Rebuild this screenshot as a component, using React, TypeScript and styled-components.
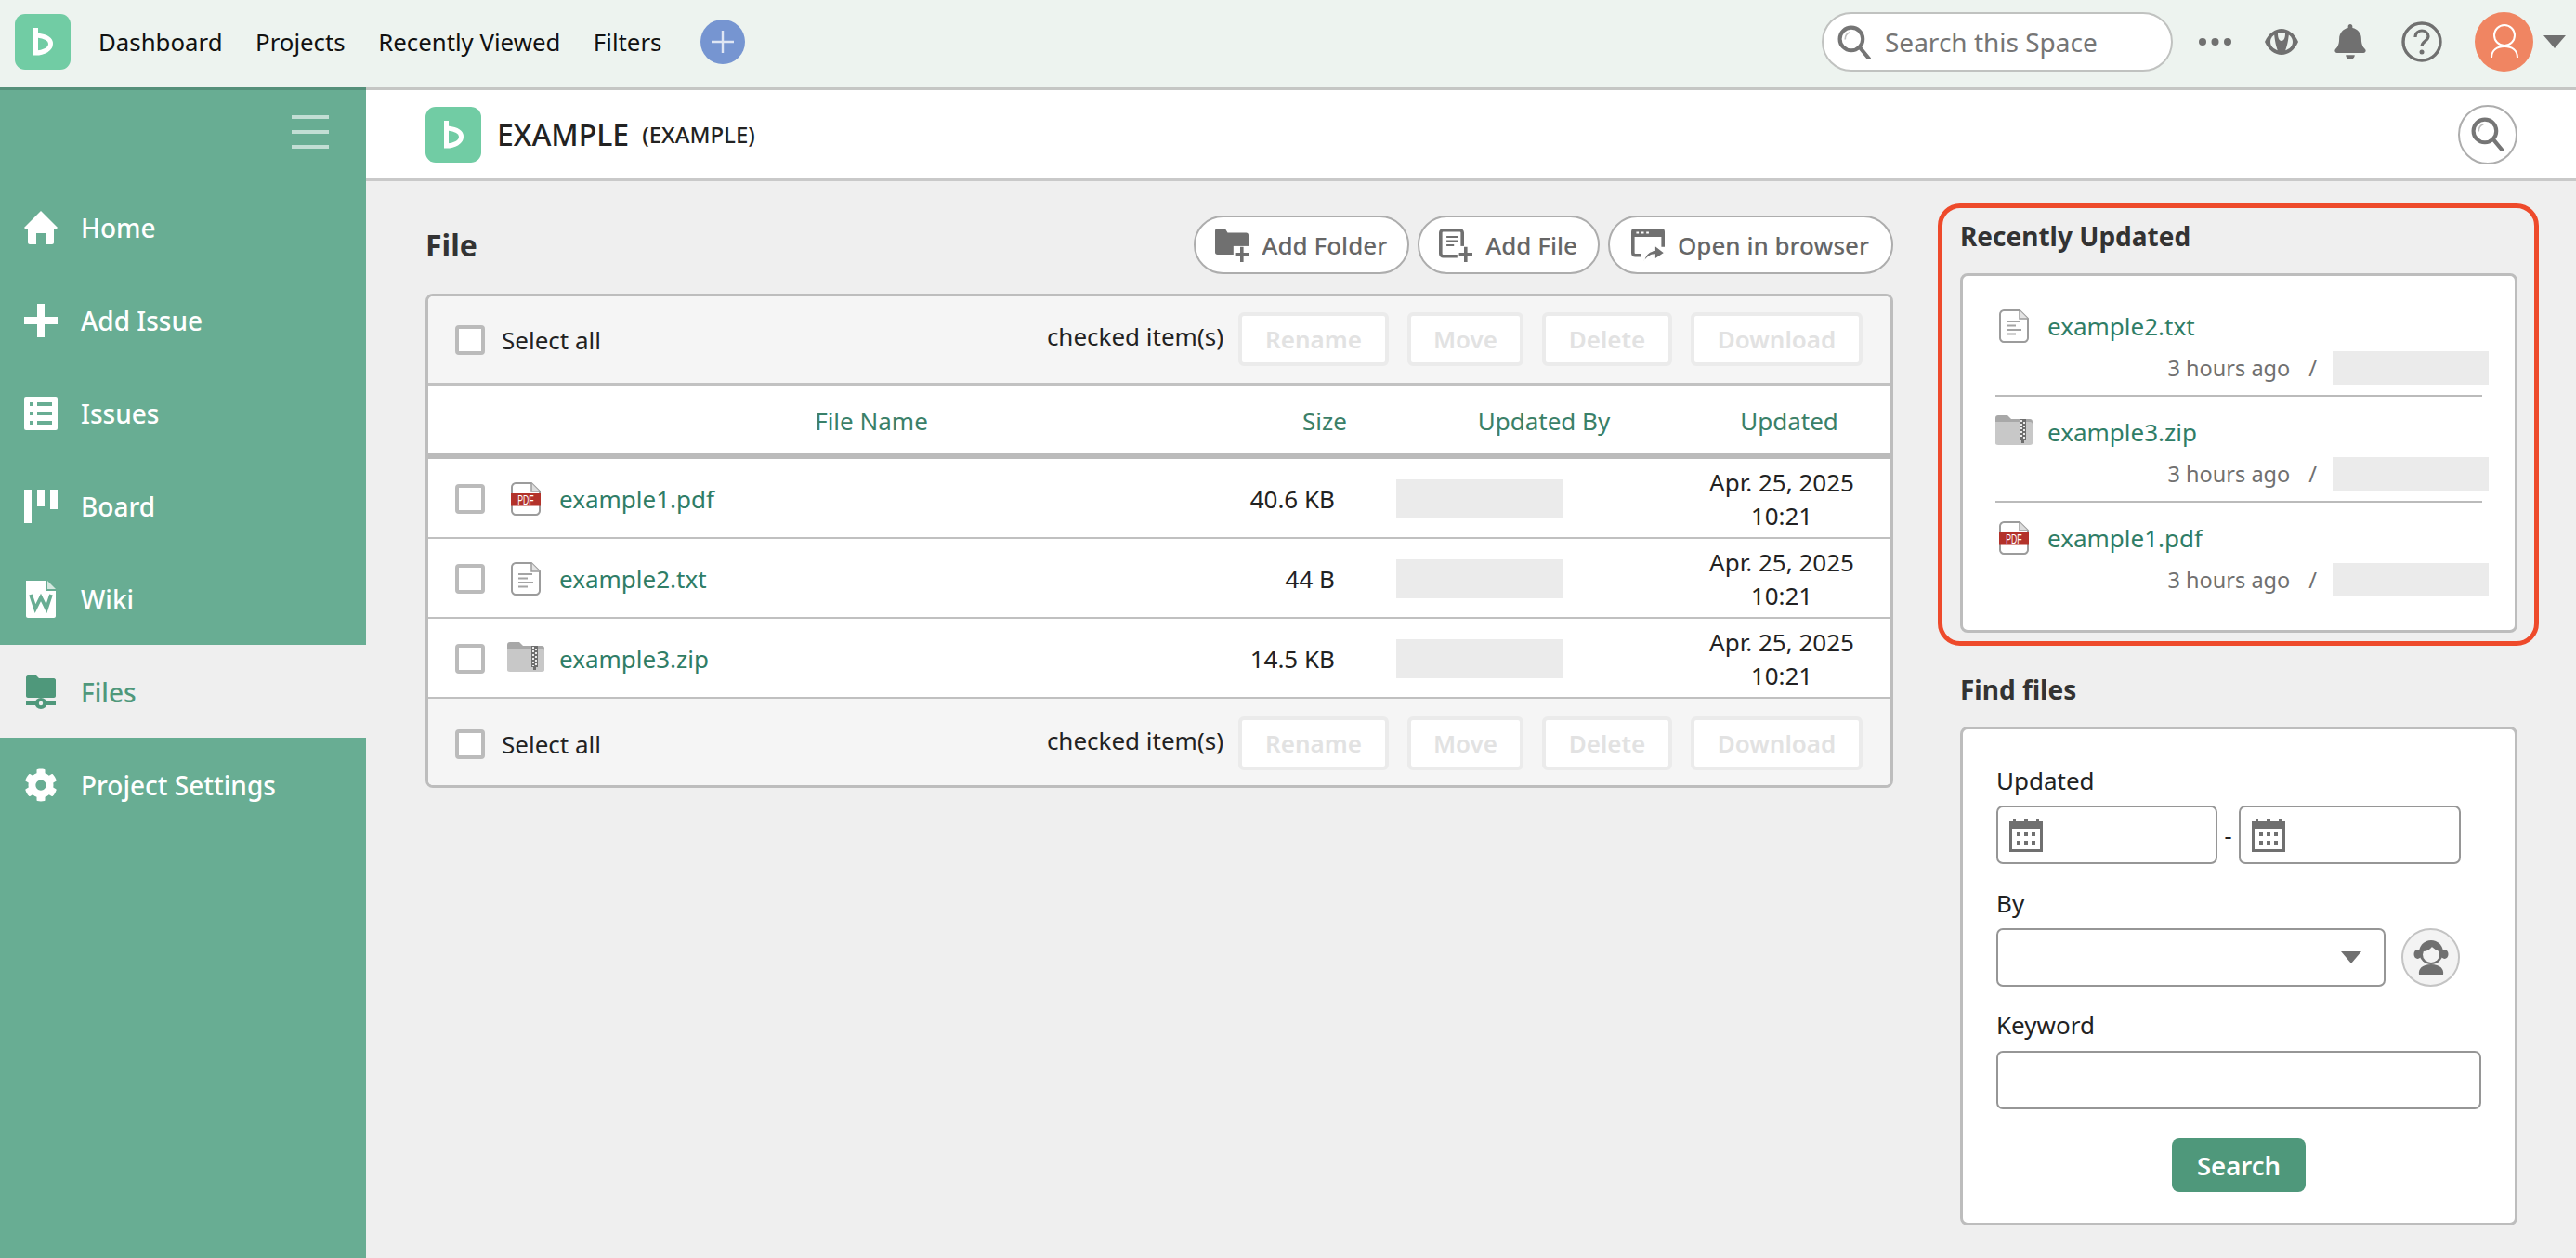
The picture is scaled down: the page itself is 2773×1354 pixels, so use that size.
import React from 'react';
import styled, { createGlobalStyle } from 'styled-components';
import { FaBell, FaCog } from 'react-icons/fa';

const GlobalStyle = createGlobalStyle`
  html, body {
    margin: 0;
    padding: 0;
    background: #efefef;
    font-family: "Noto Sans", "Open Sans", sans-serif;
    color: #222;
  }
  * { box-sizing: border-box; }
`;

const Page = styled.div`
  width: 2773px;
  height: 1354px;
  display: flex;
  flex-direction: column;
  overflow: hidden;
`;

const TopBar = styled.header`
  height: 94px;
  flex: none;
  display: flex;
  align-items: center;
  padding: 0 11px 4px 16px;
  background: #edf3ef;
`;

const LogoBox = styled.div`
  width: 60px;
  height: 60px;
  flex: none;
  border-radius: 11px;
  background: #71cca4;
  display: flex;
`;

const NavList = styled.nav`
  display: flex;
  align-items: center;
  gap: 35.5px;
  margin-left: 30px;
  font-size: 25.8px;
  color: #111;
`;

const PlusButton = styled.div`
  width: 48px;
  height: 48px;
  border-radius: 50%;
  background: #7695d1;
  display: flex;
  align-items: center;
  justify-content: center;
  margin-left: 6px;
`;

const SpaceSearch = styled.div`
  width: 378px;
  height: 64px;
  margin-left: auto;
  border: 2px solid #c0c2c0;
  border-radius: 32px;
  background: #fff;
  display: flex;
  align-items: center;
  gap: 14px;
  padding-left: 15px;
  font-size: 28px;
  color: #757575;
`;

const TopIcons = styled.div`
  display: flex;
  align-items: center;
  margin-left: 27px;
`;

const DotsIcon = styled.svg`
  width: 37px;
  height: 10px;
  margin-right: 35px;
`;

const EyeIcon = styled.svg`
  width: 36px;
  height: 28px;
  margin-right: 37px;
`;

const BellIcon = styled(FaBell)`
  width: 38px;
  height: 38px;
  margin-right: 36px;
  color: #707070;
`;

const HelpIcon = styled.svg`
  width: 44px;
  height: 44px;
  margin-right: 35px;
`;

const Avatar = styled.div`
  width: 63px;
  height: 64px;
  padding-bottom: 3px;
  border-radius: 50%;
  background: #f08562;
  display: flex;
  align-items: center;
  justify-content: center;
`;

const Caret = styled.div`
  margin-left: 11px;
  width: 0;
  height: 0;
  border-left: 12px solid transparent;
  border-right: 12px solid transparent;
  border-top: 14px solid #707070;
`;

const Body = styled.div`
  flex: 1;
  display: flex;
  min-height: 0;
`;

const Sidebar = styled.aside`
  width: 394px;
  flex: none;
  background: #68ad93;
  border-top: 3px solid #55907a;
`;

const MenuToggle = styled.div`
  height: 97px;
  display: flex;
  flex-direction: column;
  align-items: flex-end;
  gap: 12px;
  padding: 27px 40px 0 0;

  span {
    width: 40px;
    height: 4px;
    background: rgba(255, 255, 255, 0.6);
  }
`;

const SideItem = styled.div<{ $active?: boolean }>`
  height: 100px;
  display: flex;
  align-items: center;
  gap: 25px;
  padding: 2px 0 0 26px;
  font-size: 28px;
  font-weight: 500;
  color: ${(p) => (p.$active ? '#4f987b' : '#fff')};
  background: ${(p) => (p.$active ? '#efefef' : 'transparent')};

  svg {
    width: 36px;
    height: 40px;
    flex: none;
  }
`;

const Main = styled.main`
  flex: 1;
  min-width: 0;
  display: flex;
  flex-direction: column;
`;

const SpaceHeader = styled.div`
  height: 101px;
  flex: none;
  display: flex;
  align-items: center;
  padding: 0 63px 0 64px;
  background: #fff;
  border-top: 3px solid #c5c6c4;
  border-bottom: 3px solid #c9c9c9;
`;

const SpaceName = styled.span`
  margin-left: 17px;
  font-size: 32px;
  font-weight: 500;
  color: #222;
`;

const SpaceKey = styled.span`
  margin-left: 14px;
  font-size: 24px;
  font-weight: 500;
  color: #222;
`;

const RoundSearch = styled.div`
  margin-left: auto;
  width: 64px;
  height: 64px;
  border: 2px solid #adadad;
  border-radius: 50%;
  display: flex;
  align-items: center;
  justify-content: center;
`;

const Content = styled.div`
  flex: 1;
  display: flex;
  align-items: flex-start;
  gap: 48px;
  padding-left: 64px;
`;

const FileColumn = styled.section`
  width: 1580px;
  flex: none;
  margin-top: 37px;
`;

const TitleRow = styled.div`
  height: 63px;
  display: flex;
  align-items: center;
  gap: 9px;
  margin-bottom: 21px;
`;

const PageTitle = styled.h2`
  margin: 0 auto 0 0;
  font-size: 32px;
  font-weight: 700;
  color: #333;
`;

const PillButton = styled.div<{ $compact?: boolean }>`
  height: 63px;
  display: flex;
  align-items: center;
  gap: 14px;
  padding: 0 ${(p) => (p.$compact ? '22px 0 21px' : '24px 0 23px')};
  border: 2px solid #adadad;
  border-radius: 32px;
  background: #fff;
  font-size: 26px;
  font-weight: 500;
  color: #666;

  svg {
    width: 36px;
    height: 36px;
    flex: none;
  }
`;

const TablePanel = styled.div`
  border: 3px solid #bdbdbd;
  border-radius: 8px;
  background: #fff;
  overflow: hidden;
`;

const Toolbar = styled.div<{ $bottom?: boolean }>`
  height: ${(p) => (p.$bottom ? '93px' : '96px')};
  display: flex;
  align-items: center;
  padding: ${(p) => (p.$bottom ? '5px' : '1px')} 30px 0 29px;
  background: #f5f5f5;
  border-bottom: ${(p) => (p.$bottom ? 'none' : '3px solid #c2c2c2')};
  font-size: 26px;
  color: #222;
`;

const CheckBox = styled.span`
  width: 32px;
  height: 32px;
  flex: none;
  border: 4px solid #bbb;
  border-radius: 4px;
  background: #fff;
`;

const SelectAll = styled.span`
  margin-left: 18px;
`;

const CheckedLabel = styled.span`
  margin: 0 16px 8px auto;
`;

const ActionGroup = styled.div`
  display: flex;
  gap: 20px;
  margin-top: -3px;
`;

const ActionButton = styled.div<{ $width: number }>`
  width: ${(p) => p.$width}px;
  height: 58px;
  display: flex;
  align-items: center;
  justify-content: center;
  border: 4px solid #ebebeb;
  border-radius: 6px;
  background: #fff;
  font-size: 26px;
  font-weight: 600;
  color: #e2e2e2;
`;

const TableGrid = styled.div`
  display: grid;
  grid-template-columns: 79px 826px 120px 352px 197px;
  align-items: center;
`;

const HeadRow = styled(TableGrid)`
  height: 79px;
  padding-top: 3px;
  border-bottom: 6px solid #bbb;
  font-size: 26px;
  color: #3a8068;
  text-align: center;
`;

const HeadCell = styled.div<{ $pad?: number }>`
  padding-right: ${(p) => p.$pad ?? 0}px;
`;

const FileRow = styled(TableGrid)`
  height: 86px;
  padding-top: 2px;
  border-bottom: 2px solid #c0c0c0;
  font-size: 26px;
`;

const CheckCell = styled.div`
  padding-left: 29px;
  display: flex;
`;

const FileName = styled.div<{ $indent?: number }>`
  display: flex;
  align-items: center;
  gap: 16px;
  height: 36px;
  padding-left: ${(p) => p.$indent ?? 0}px;
  font-size: 26px;
  color: #2f7d66;
`;

const IconSlot = styled.span`
  width: 40px;
  height: 36px;
  flex: none;
  display: flex;
  align-items: center;
  justify-content: center;
`;

const SizeCell = styled.div`
  margin-left: -40px;
  padding-right: 49px;
  text-align: right;
  white-space: nowrap;
  color: #222;
`;

const UserCell = styled.div`
  padding-left: 17px;
`;

const Blank = styled.div<{ $w: number; $h: number }>`
  width: ${(p) => p.$w}px;
  height: ${(p) => p.$h}px;
  flex: none;
  background: #ebebeb;
`;

const DateCell = styled.div`
  padding-right: 37px;
  text-align: center;
  line-height: 36px;
  white-space: nowrap;
  color: #222;
`;

const SideColumn = styled.div`
  width: 647px;
  flex: none;
  margin-top: 24px;
`;

const Highlight = styled.section`
  height: 476px;
  padding: 12px 18px 0 19px;
  border: 5px solid #ee4a2b;
  border-radius: 24px;
`;

const SideTitle = styled.h3`
  margin: 0 0 22px;
  height: 36px;
  line-height: 36px;
  font-size: 28px;
  font-weight: 700;
  color: #333;
`;

const Card = styled.div`
  border: 3px solid #bdbdbd;
  border-radius: 8px;
  background: #fff;
`;

const RecentCard = styled(Card)`
  padding: 16px 0 23px 35px;
`;

const RecentItem = styled.div<{ $last?: boolean }>`
  width: 524px;
  padding: 20px 0 11px;
  border-bottom: 2px solid ${(p) => (p.$last ? 'transparent' : '#bbb')};
`;

const MetaRow = styled.div`
  display: flex;
  align-items: center;
  justify-content: flex-end;
  margin: 9px -7px 0 0;
  font-size: 23.5px;
  color: #707070;
`;

const Slash = styled.span`
  margin: 0 17px 0 20px;
`;

const FindSection = styled.section`
  padding-left: 24px;
  width: 624px;
  margin-top: 29px;
`;

const FindCard = styled(Card)`
  padding: 37px 36px 33px;
`;

const FieldLabel = styled.div<{ $gap?: number; $after?: number }>`
  height: 36px;
  line-height: 36px;
  margin: ${(p) => p.$gap ?? 0}px 0 ${(p) => p.$after ?? 9}px;
  font-size: 26px;
  color: #222;
`;

const FieldRow = styled.div`
  display: flex;
  align-items: center;
`;

const InputBox = styled.div<{ $width: number }>`
  width: ${(p) => p.$width}px;
  height: 63px;
  flex: none;
  display: flex;
  align-items: center;
  justify-content: space-between;
  padding: 0 24px 0 12px;
  border: 2px solid #969696;
  border-radius: 7px;
  background: #fff;
`;

const DateDash = styled.span`
  width: 23px;
  text-align: center;
  font-size: 25px;
`;

const SelectCaret = styled.span`
  margin-left: auto;
  width: 0;
  height: 0;
  border-left: 11px solid transparent;
  border-right: 11px solid transparent;
  border-top: 13px solid #707070;
`;

const UserPicker = styled.div`
  width: 63px;
  height: 63px;
  margin-left: 17px;
  border: 2px solid #c4c4c4;
  border-radius: 50%;
  background: #f3f3f3;
  display: flex;
  align-items: center;
  justify-content: center;
`;

const SearchButton = styled.div`
  width: 144px;
  height: 58px;
  margin: 31px auto 0;
  display: flex;
  align-items: center;
  justify-content: center;
  border-radius: 8px;
  background: #4f987b;
  font-size: 27.5px;
  font-weight: 600;
  color: #fff;
`;

const BackLogo = () => (
  <LogoBox>
    <svg width="60" height="60" viewBox="0 0 60 60">
      <path d="M22.5 15V42C31 42 38.500 38 38.500 32C38.500 27 32 24 24 23" fill="none" stroke="#fff" strokeWidth="5" />
    </svg>
  </LogoBox>
);

const Magnifier = ({ size, color = '#757575' }: { size: number; color?: string }) => (
  <svg width={size} height={size} viewBox="0 0 36 36">
    <circle cx="14.500" cy="14.500" r="12" fill="#fff" stroke={color} strokeWidth="4" />
    <path d="M23 23L33 35" stroke={color} strokeWidth="4" strokeLinecap="round" />
    <path d="M8 15C8 11 10 8.500 13 7.500" fill="none" stroke="#bdbdbd" strokeWidth="1.600" />
  </svg>
);

const HomeGlyph = () => (
  <svg viewBox="0 0 36 40" fill="#fff">
    <path d="M18 2L36 20L34 22H32V36C32 37 31 38 30 38H23V26H13V38H6C5 38 4 37 4 36V22H2L0 20Z" />
  </svg>
);

const PlusGlyph = () => (
  <svg viewBox="0 0 36 40" fill="#fff">
    <path d="M14 2H22V16H36V24H22V38H14V24H0V16H14Z" />
  </svg>
);

const IssuesGlyph = () => (
  <svg viewBox="0 0 36 40">
    <rect x="0" y="2" width="36" height="36" rx="2" fill="#fff" />
    <path d="M6 10H10M14 10H30M6 20H10M14 20H30M6 30H10M14 30H30" stroke="#68ad93" strokeWidth="4" />
  </svg>
);

const BoardGlyph = () => (
  <svg viewBox="0 0 36 40" fill="#fff">
    <rect x="0" y="2" width="8" height="36" />
    <rect x="14" y="2" width="8" height="18" />
    <rect x="28" y="2" width="8" height="21" />
  </svg>
);

const WikiGlyph = () => (
  <svg viewBox="0 0 36 40">
    <path d="M2 0H23V11H34V38C34 39 33 40 32 40H4C3 40 2 39 2 38Z" fill="#fff" />
    <path d="M25 0L34 9H25Z" fill="#d3e8df" />
    <path d="M7 15L12 30L18 18L24 30L29 15" fill="none" stroke="#68ad93" strokeWidth="3.800" />
  </svg>
);

const FilesGlyph = () => (
  <svg viewBox="0 0 36 40" fill="#4f987b">
    <path d="M2 4C2 3 3 2 4 2H13L16 5H32C33 5 34 6 34 7V24C34 25 33 26 32 26H4C3 26 2 25 2 24Z" />
    <rect x="2" y="30" width="32" height="4" />
    <ellipse cx="18" cy="32" rx="6.500" ry="6" />
    <circle cx="18" cy="32" r="2.200" fill="#efefef" />
  </svg>
);

const PdfIcon = () => (
  <svg width="32" height="36" viewBox="0 0 32 36">
    <path d="M5 1H22L31 10V31C31 33 29 35 27 35H5C3 35 1 33 1 31V5C1 3 3 1 5 1Z" fill="#fff" stroke="#9c9c9c" strokeWidth="2" />
    <path d="M22 1V10H31" fill="#ddd" stroke="#9c9c9c" strokeWidth="1.500" />
    <rect x="0" y="12" width="32" height="13.500" fill="#b3322a" />
    <text transform="translate(16 24) scale(0.62 1)" textAnchor="middle" fontFamily="Liberation Sans, sans-serif" fontSize="14" fill="#fff">PDF</text>
  </svg>
);

const TxtIcon = () => (
  <svg width="32" height="36" viewBox="0 0 32 36">
    <path d="M5 1H22L31 10V31C31 33 29 35 27 35H5C3 35 1 33 1 31V5C1 3 3 1 5 1Z" fill="#fff" stroke="#9c9c9c" strokeWidth="2" />
    <path d="M22 1V10H31" fill="#e4e4e4" stroke="#9c9c9c" strokeWidth="1.500" />
    <path d="M8 13H23M8 17.500H18M8 22H24M8 26.500H18" stroke="#a4a4a4" strokeWidth="2" />
  </svg>
);

const ZipIcon = () => (
  <svg width="40" height="36" viewBox="0 0 40 36">
    <path d="M0 3C0 1 1 0 3 0H13L17 4H37C39 4 40 5 40 7V12H0Z" fill="#a8a8a8" />
    <path d="M0 7H37C39 7 40 8 40 10V30C40 31 39 32 37 32H3C1 32 0 31 0 30Z" fill="#c8c8c8" />
    <rect x="26" y="4" width="7" height="23" fill="#6e6e6e" />
    <rect x="28" y="27" width="3" height="3" fill="#6e6e6e" />
    <path d="M28 5V26" stroke="#ececec" strokeWidth="2" strokeDasharray="2 2" />
    <path d="M31 5V26" stroke="#ececec" strokeWidth="2" strokeDasharray="2 2" strokeDashoffset="2" />
  </svg>
);

const FolderAddGlyph = () => (
  <svg viewBox="0 0 40 40">
    <path d="M0 3C0 1 1 0 3 0H12L15 5H37C39 5 40 6 40 8V28C40 30 39 31 37 31H3C1 31 0 30 0 28Z" fill="#707070" />
    <rect x="22" y="21" width="18" height="19" fill="#fff" />
    <path d="M32 22V40M24 31H40" stroke="#707070" strokeWidth="4" />
  </svg>
);

const FileAddGlyph = () => (
  <svg viewBox="0 0 40 40">
    <rect x="2" y="2" width="26" height="31" rx="3" fill="none" stroke="#707070" strokeWidth="4" />
    <path d="M9 10H23M9 15H23M9 20H18" stroke="#707070" strokeWidth="2.400" />
    <rect x="22" y="21" width="18" height="19" fill="#fff" />
    <path d="M32 22V40M24 31H40" stroke="#707070" strokeWidth="4" />
  </svg>
);

const BrowserGlyph = () => (
  <svg viewBox="0 0 40 40">
    <path d="M0 4C0 2 1 0 3 0H37C39 0 40 2 40 4V10H0Z" fill="#707070" />
    <path d="M2 8V29C2 31 3 32 5 32H12M38 8V22" fill="none" stroke="#707070" strokeWidth="4" />
    <path d="M6 5H9M12 5H15M18 5H21" stroke="#fff" strokeWidth="2" />
    <path d="M15 40C16 32 21 27 28 26V20L40 29L28 37V31C23 31 19 34 15 40Z" fill="#707070" stroke="#fff" strokeWidth="1.500" />
  </svg>
);

const CalendarIcon = () => (
  <svg width="36" height="36" viewBox="0 0 36 36">
    <path d="M0 3H4V0H7V3H16V0H20V3H29V0H32V3H36V36H0Z" fill="#707070" />
    <rect x="3" y="11" width="30" height="22" fill="#fff" />
    <path d="M8 15H12V19H8ZM16 15H20V19H16ZM24 15H28V19H24ZM8 24H12V28H8ZM16 24H20V28H16ZM24 24H28V28H24Z" fill="#707070" />
  </svg>
);

const PersonIcon = () => (
  <svg width="38" height="38" viewBox="0 0 38 38" fill="#707070">
    <circle cx="19" cy="13" r="13" />
    <ellipse cx="4.500" cy="15" rx="4" ry="5" />
    <ellipse cx="33.500" cy="15" rx="4" ry="5" />
    <path d="M6 37C5 31 9 26 19 26C29 26 33 31 32 37Z" />
    <ellipse cx="19" cy="15.500" rx="9" ry="8.500" fill="#f3f3f3" />
    <path d="M10 12C14 12 18 10 20 7C22 9 25 11 28 12L26 5H12Z" />
  </svg>
);

const sideMenu = [
  { label: 'Home', icon: <HomeGlyph /> },
  { label: 'Add Issue', icon: <PlusGlyph /> },
  { label: 'Issues', icon: <IssuesGlyph /> },
  { label: 'Board', icon: <BoardGlyph /> },
  { label: 'Wiki', icon: <WikiGlyph /> },
  { label: 'Files', icon: <FilesGlyph />, active: true },
  { label: 'Project Settings', icon: <FaCog color="#fff" /> },
];

const files = [
  { name: 'example1.pdf', size: '40.6 KB', icon: <PdfIcon /> },
  { name: 'example2.txt', size: '44 B', icon: <TxtIcon /> },
  { name: 'example3.zip', size: '14.5 KB', icon: <ZipIcon /> },
];

const recent = [files[1], files[2], files[0]];

const FileToolbar = ({ bottom }: { bottom?: boolean }) => (
  <Toolbar $bottom={bottom}>
    <CheckBox />
    <SelectAll>Select all</SelectAll>
    <CheckedLabel>checked item(s)</CheckedLabel>
    <ActionGroup>
      <ActionButton $width={162}>Rename</ActionButton>
      <ActionButton $width={125}>Move</ActionButton>
      <ActionButton $width={140}>Delete</ActionButton>
      <ActionButton $width={185}>Download</ActionButton>
    </ActionGroup>
  </Toolbar>
);

const App: React.FC = () => {
  return (
    <Page>
      <GlobalStyle />
      <TopBar>
        <BackLogo />
        <NavList>
          <span>Dashboard</span>
          <span>Projects</span>
          <span>Recently Viewed</span>
          <span>Filters</span>
          <PlusButton>
            <svg width="26" height="26" viewBox="0 0 26 26">
              <path d="M13 1V25M1 13H25" stroke="#dfe6f4" strokeWidth="2.400" />
            </svg>
          </PlusButton>
        </NavList>
        <SpaceSearch>
          <Magnifier size={37} />
          <span>Search this Space</span>
        </SpaceSearch>
        <TopIcons>
          <DotsIcon viewBox="0 0 37 10">
            <circle cx="5" cy="5" r="4" fill="#707070" />
            <circle cx="18.500" cy="5" r="4" fill="#707070" />
            <circle cx="32" cy="5" r="4" fill="#707070" />
          </DotsIcon>
          <EyeIcon viewBox="0 0 36 28">
            <path d="M0 14C4 5 11 0 18 0C25 0 32 5 36 14C32 23 25 28 18 28C11 28 4 23 0 14Z" fill="#707070" />
            <ellipse cx="18" cy="14" rx="12" ry="10" fill="#edf3ef" />
            <circle cx="18" cy="9" r="4" fill="#edf3ef" />
            <path d="M10 5C11 14 12 18 14 24H22C24 18 25 14 26 5C24 2 22 3 22 5C22 9 21 13 18 13C15 13 14 9 14 5C14 3 12 2 10 5Z" fill="#707070" />
          </EyeIcon>
          <BellIcon />
          <HelpIcon viewBox="0 0 44 44">
            <circle cx="22" cy="22" r="20" fill="none" stroke="#707070" strokeWidth="3.400" />
            <path d="M15 17C15 12 19 10 22 10C26 10 29 13 29 16C29 21 22 21 22 27" fill="none" stroke="#707070" strokeWidth="3.200" />
            <circle cx="22" cy="33" r="2.500" fill="#707070" />
          </HelpIcon>
          <Avatar>
            <svg width="30" height="36" viewBox="0 0 30 36" fill="none" stroke="#fff" strokeWidth="2">
              <circle cx="15" cy="12" r="11" />
              <path d="M1 36C1 28 7 24 15 24C23 24 29 28 29 36" />
            </svg>
          </Avatar>
          <Caret />
        </TopIcons>
      </TopBar>
      <Body>
        <Sidebar>
          <MenuToggle>
            <span />
            <span />
            <span />
          </MenuToggle>
          {sideMenu.map((item) => (
            <SideItem key={item.label} $active={item.active}>
              {item.icon}
              {item.label}
            </SideItem>
          ))}
        </Sidebar>
        <Main>
          <SpaceHeader>
            <BackLogo />
            <SpaceName>EXAMPLE</SpaceName>
            <SpaceKey>(EXAMPLE)</SpaceKey>
            <RoundSearch>
              <Magnifier size={37} />
            </RoundSearch>
          </SpaceHeader>
          <Content>
            <FileColumn>
              <TitleRow>
                <PageTitle>File</PageTitle>
                <PillButton $compact>
                  <FolderAddGlyph />
                  Add Folder
                </PillButton>
                <PillButton $compact>
                  <FileAddGlyph />
                  Add File
                </PillButton>
                <PillButton>
                  <BrowserGlyph />
                  Open in browser
                </PillButton>
              </TitleRow>
              <TablePanel>
                <FileToolbar />
                <HeadRow>
                  <div />
                  <HeadCell $pad={30}>File Name</HeadCell>
                  <HeadCell>Size</HeadCell>
                  <HeadCell>Updated By</HeadCell>
                  <HeadCell $pad={21}>Updated</HeadCell>
                </HeadRow>
                {files.map((file) => (
                  <FileRow key={file.name}>
                    <CheckCell>
                      <CheckBox />
                    </CheckCell>
                    <FileName $indent={6}>
                      <IconSlot>{file.icon}</IconSlot>
                      {file.name}
                    </FileName>
                    <SizeCell>{file.size}</SizeCell>
                    <UserCell>
                      <Blank $w={180} $h={42} />
                    </UserCell>
                    <DateCell>
                      Apr. 25, 2025
                      <br />
                      10:21
                    </DateCell>
                  </FileRow>
                ))}
                <FileToolbar bottom />
              </TablePanel>
            </FileColumn>
            <SideColumn>
              <Highlight>
                <SideTitle>Recently Updated</SideTitle>
                <RecentCard>
                  {recent.map((file, i) => (
                    <RecentItem key={file.name} $last={i === recent.length - 1}>
                      <FileName>
                        <IconSlot>{file.icon}</IconSlot>
                        {file.name}
                      </FileName>
                      <MetaRow>
                        3 hours ago
                        <Slash>/</Slash>
                        <Blank $w={168} $h={36} />
                      </MetaRow>
                    </RecentItem>
                  ))}
                </RecentCard>
              </Highlight>
              <FindSection>
                <SideTitle>Find files</SideTitle>
                <FindCard>
                  <FieldLabel>Updated</FieldLabel>
                  <FieldRow>
                    <InputBox $width={238}>
                      <CalendarIcon />
                    </InputBox>
                    <DateDash>-</DateDash>
                    <InputBox $width={239}>
                      <CalendarIcon />
                    </InputBox>
                  </FieldRow>
                  <FieldLabel $gap={24}>By</FieldLabel>
                  <FieldRow>
                    <InputBox $width={419}>
                      <SelectCaret />
                    </InputBox>
                    <UserPicker>
                      <PersonIcon />
                    </UserPicker>
                  </FieldRow>
                  <FieldLabel $gap={23} $after={10}>Keyword</FieldLabel>
                  <InputBox $width={522} />
                  <SearchButton>Search</SearchButton>
                </FindCard>
              </FindSection>
            </SideColumn>
          </Content>
        </Main>
      </Body>
    </Page>
  );
};

export default App;
